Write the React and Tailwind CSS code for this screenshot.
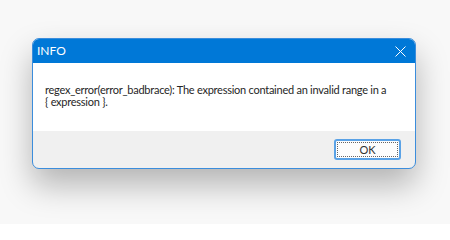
import React from "react";

export default function App() {
  return (
    <div className="w-[450px] h-[224px] bg-[#f8f8f8] pt-[38px] pl-[32px] font-['Lato',sans-serif]">
      <div className="w-[384px] h-[131px] flex flex-col rounded-[7px] border border-[#3b8ddc] bg-[#f0f0f0] overflow-hidden shadow-[0_16px_32px_rgba(0,0,0,0.28)]">
        {/* title bar */}
        <div className="h-[24px] shrink-0 bg-[#0078d7] flex items-center justify-between pl-[4px] pr-[9px]">
          <span className="text-[12px] text-white leading-none">INFO</span>
          <svg width="11" height="11" viewBox="0 0 11 11" className="text-white">
            <path d="M0.5 0.5 L10.5 10.5 M10.5 0.5 L0.5 10.5" stroke="currentColor" strokeWidth="1" fill="none" />
          </svg>
        </div>

        {/* message */}
        <div className="h-[68px] shrink-0 bg-white pl-[12px] pt-[21px]">
          <p className="text-[11px] leading-[12px] tracking-[-0.25px] text-[#262626] whitespace-nowrap">
            regex_error(error_badbrace): The expression contained an invalid range in a
            <br />
            {"{ expression }."}
          </p>
        </div>

        {/* buttons */}
        <div className="flex-1 flex justify-end items-start pt-[8px] pr-[14px]">
          <button className="w-[67px] h-[21px] rounded-[3px] border-[2px] border-[#5aa2e6] bg-[#fdfdfd] p-[1px]">
            <div className="w-full h-full border border-dotted border-[#666] flex items-center justify-center text-[11px] text-[#333] leading-none">
              OK
            </div>
          </button>
        </div>
      </div>
    </div>
  );
}
